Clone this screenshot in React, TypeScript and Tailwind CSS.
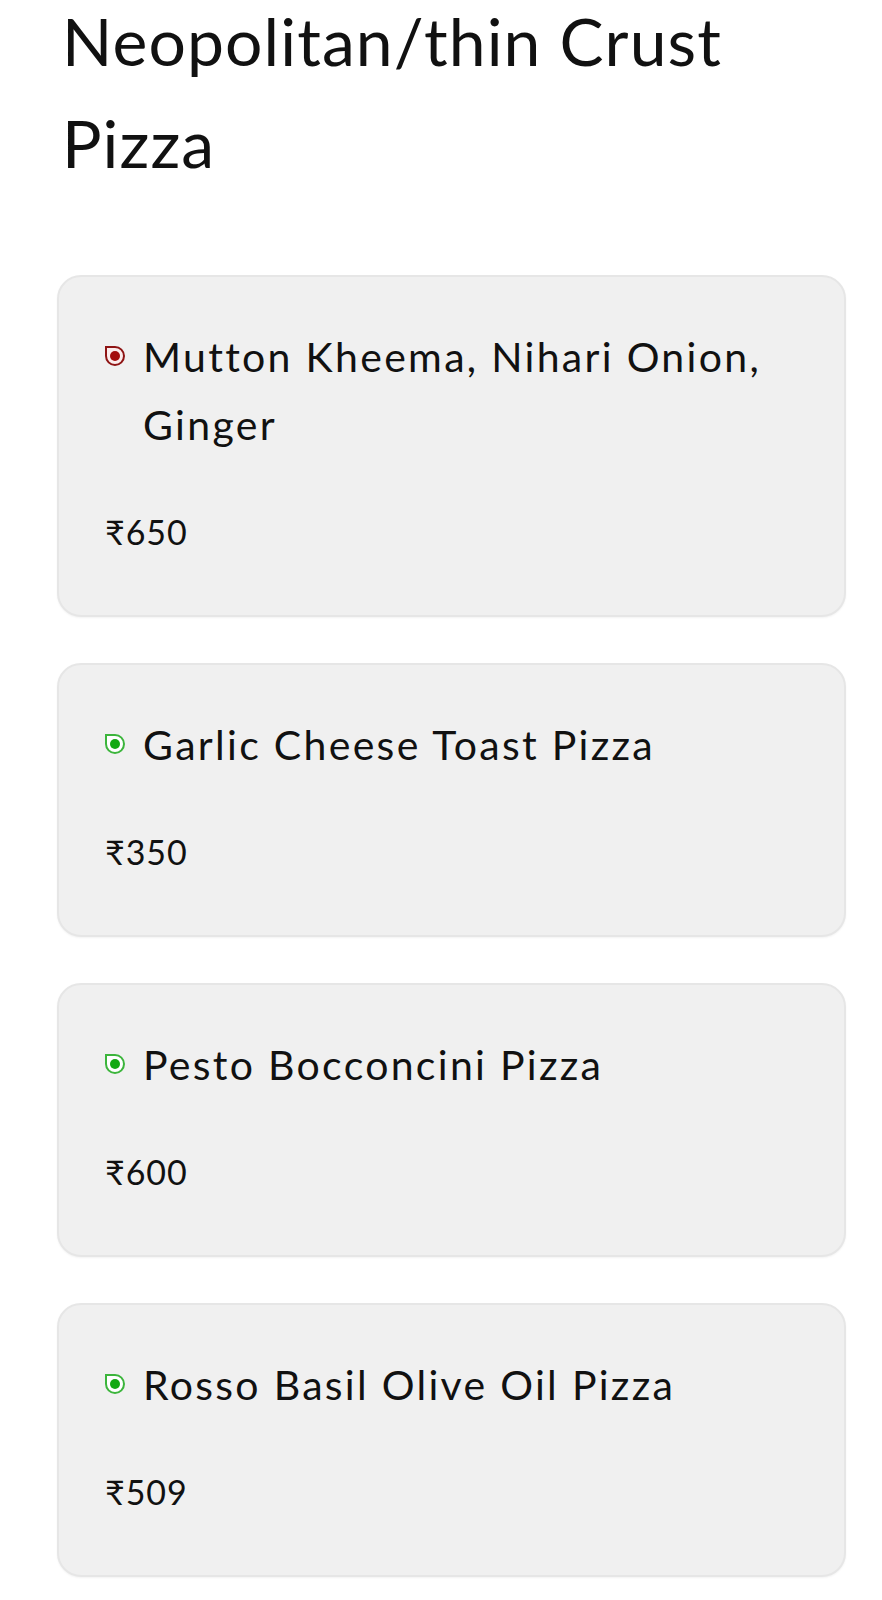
const items = [
  { name: "Mutton Kheema, Nihari Onion, Ginger", price: "₹650", veg: false },
  { name: "Garlic Cheese Toast Pizza", price: "₹350", veg: true },
  { name: "Pesto Bocconcini Pizza", price: "₹600", veg: true },
  { name: "Rosso Basil Olive Oil Pizza", price: "₹509", veg: true },
];

const DietMark = ({ veg }: { veg: boolean }) => (
  <span
    className={
      veg
        ? "mt-[23px] flex h-[20px] w-[20px] shrink-0 items-center justify-center rounded-full rounded-tl-none border-2 border-[#3cb53c] bg-white"
        : "mt-[23px] flex h-[20px] w-[20px] shrink-0 items-center justify-center rounded-full rounded-tl-none border-2 border-[#8e1414] bg-[#fbecec]"
    }
  >
    <span
      className={
        veg
          ? "h-[10px] w-[10px] rounded-full bg-[#14a914]"
          : "h-[10px] w-[10px] rounded-full bg-[#a30d0d]"
      }
    />
  </span>
);

export default function App() {
  return (
    <div className="min-h-[1600px] bg-white pb-10 font-['Lato',sans-serif] text-[#111111]">
      <h1 className="-mt-[10px] ml-[62px] w-[750px] text-[66px] font-normal leading-[102px] tracking-[1.1px]">
        Neopolitan/thin Crust Pizza
      </h1>

      <div className="mt-[81px] ml-[57px] flex w-[789px] flex-col gap-[46px]">
        {items.map((item) => (
          <div
            key={item.name}
            className="rounded-[24px] border-2 border-[#e6e6e6] bg-[#f0f0f0] px-[46px] pt-[46px] pb-[63px] shadow-[0_1px_2px_rgba(0,0,0,0.05)]"
          >
            <div className="flex items-start gap-[18px]">
              <DietMark veg={item.veg} />
              <p className="text-[41px] leading-[68px] tracking-[2.3px]">{item.name}</p>
            </div>
            <p className="mt-[53px] text-[34px] leading-[40px] tracking-[1px]">{item.price}</p>
          </div>
        ))}
      </div>
    </div>
  );
}
